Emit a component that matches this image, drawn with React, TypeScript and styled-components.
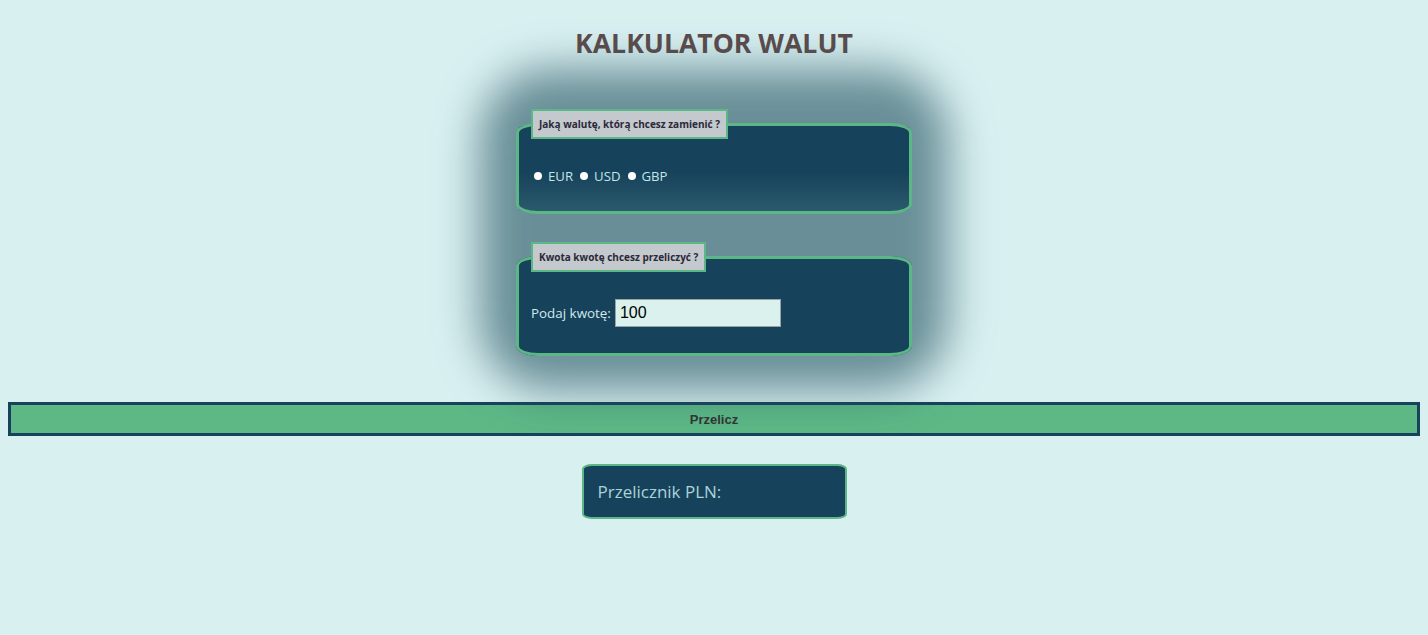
import React from "react";
import styled, { createGlobalStyle } from "styled-components";

const GlobalStyle = createGlobalStyle`
  html, body {
    background: #d9f0f1;
  }
  body {
    margin: 8px;
    font-family: "Open Sans", "DejaVu Sans", sans-serif;
  }
`;

const Page = styled.main`
  display: flex;
  flex-direction: column;
  align-items: center;
`;

const Title = styled.h1`
  margin: 17px 0 0;
  font-family: "Open Sans", sans-serif;
  font-weight: 700;
  font-size: 26.6px;
  line-height: 36px;
  color: #5e4b4b;
`;

const Form = styled.form`
  position: relative;
  z-index: 0;
  width: 396px;
  margin-top: 48px;
  display: flex;
  flex-direction: column;
  gap: 28px;

  &::before {
    content: "";
    position: absolute;
    inset: -40px -36px -34px -36px;
    z-index: -1;
    border-radius: 70px;
    background: rgba(35, 82, 96, 0.62);
    filter: blur(22px);
  }
`;

const Fieldset = styled.fieldset<{ $glow?: boolean }>`
  margin: 0;
  padding: 0 12px;
  border: 3px solid #5cb787;
  border-radius: 22px / 10px;
  background: ${(p) =>
    p.$glow
      ? "linear-gradient(to bottom, #17425b 0%, #17425b 55%, #2b5a6c 100%)"
      : "#17425b"};
  min-width: 0;
`;

const Legend = styled.legend`
  padding: 7px 6px 6px;
  border: 2px solid #5cb787;
  background: #c4c9cd;
  color: #2b2838;
  font-family: "Open Sans", sans-serif;
  font-weight: 700;
  font-size: 10px;
  line-height: 13px;
`;

const Body = styled.div<{ $top: number; $bottom: number }>`
  display: flex;
  align-items: center;
  padding-top: ${(p) => p.$top}px;
  padding-bottom: ${(p) => p.$bottom}px;
`;

const RadioRow = styled.div`
  display: flex;
  align-items: center;
`;

const RadioItem = styled.label`
  display: inline-flex;
  align-items: center;
  color: #c3e5e9;
  font-size: 13.2px;
  line-height: 18px;
  & + & {
    margin-left: 4px;
  }
`;

const Dot = styled.input`
  appearance: none;
  width: 8px;
  height: 8px;
  border-radius: 50%;
  background: #ffffff;
  margin: 0 6px 0 3px;
`;

const AmountLabel = styled.label`
  color: #d2e9eb;
  font-size: 13.4px;
  line-height: 18px;
  margin-right: 4px;
`;

const AmountInput = styled.input`
  width: 166px;
  height: 28px;
  box-sizing: border-box;
  border: 1px solid #9aa3a3;
  background: #daf1ee;
  font-family: "Liberation Sans", Arial, sans-serif;
  font-size: 16px;
  color: #000;
  padding: 0 4px;
  outline: none;
`;

const Button = styled.button`
  align-self: stretch;
  margin-top: 46px;
  height: 34px;
  border: 3px solid #17425b;
  background: #5db886;
  font-family: "Liberation Sans", Arial, sans-serif;
  font-weight: 700;
  font-size: 13px;
  color: #333333;
  cursor: pointer;
`;

const Result = styled.div`
  margin-top: 28px;
  width: 265px;
  height: 55px;
  box-sizing: border-box;
  border: 2px solid #5cb787;
  border-radius: 10px / 5px;
  background: #17425b;
  display: flex;
  align-items: center;
  padding: 0 14px;
  color: #a9d3d9;
  font-size: 17px;
`;

export default function App() {
  return (
    <>
      <GlobalStyle />
      <Page>
        <Title>KALKULATOR WALUT</Title>
        <Form onSubmit={(e) => e.preventDefault()}>
          <Fieldset $glow>
            <Legend>Jaką walutę, którą chcesz zamienić ?</Legend>
            <Body $top={28} $bottom={26}>
              <RadioRow>
                <RadioItem>
                  <Dot type="radio" name="cur" value="EUR" />
                  EUR
                </RadioItem>
                <RadioItem>
                  <Dot type="radio" name="cur" value="USD" />
                  USD
                </RadioItem>
                <RadioItem>
                  <Dot type="radio" name="cur" value="GBP" />
                  GBP
                </RadioItem>
              </RadioRow>
            </Body>
          </Fieldset>
          <Fieldset>
            <Legend>Kwota kwotę chcesz przeliczyć ?</Legend>
            <Body $top={27} $bottom={26}>
              <AmountLabel htmlFor="amount">Podaj kwotę:</AmountLabel>
              <AmountInput id="amount" type="text" defaultValue="100" />
            </Body>
          </Fieldset>
        </Form>
        <Button type="button">Przelicz</Button>
        <Result>Przelicznik PLN:</Result>
      </Page>
    </>
  );
}
